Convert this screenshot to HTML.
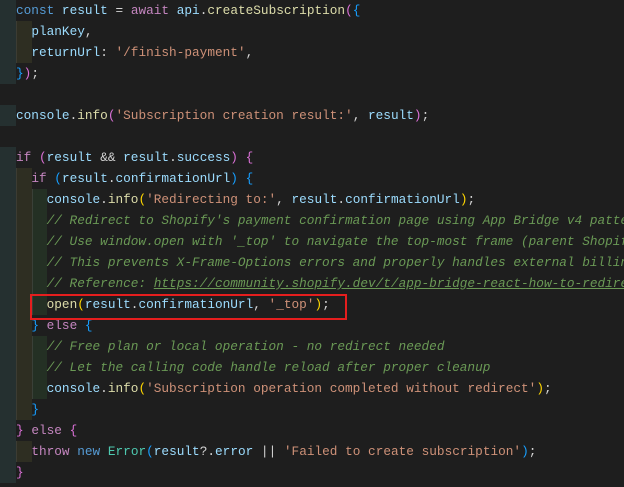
<!DOCTYPE html>
<html><head><meta charset="utf-8"><style>
body{margin:0;background:#1e1e1e;width:624px;height:487px;overflow:hidden;position:relative}
.l{position:absolute;left:0;height:21px;width:624px;overflow:hidden;white-space:pre;font-family:"Liberation Mono",monospace;font-size:12.75px;line-height:21px;color:#d4d4d4}
.t{position:absolute;left:16px;top:0}
.g0,.g1,.g2{position:absolute;top:0;height:21px}
.g0{left:0;width:16px;background:#253030}
.g1{left:16px;width:15px;background:#2e2e22;border-left:1px solid #3c3c33}
.g2{left:32px;width:14px;background:#243024;border-left:1px solid #3a4038}
.k{color:#569cd6}.v{color:#9cdcfe}.p{color:#c586c0}.f{color:#dcdcaa}.s{color:#ce9178}.c{color:#6a9955;font-style:italic}.u{text-decoration:underline}.e{color:#4ec9b0}
.b1{color:#da70d6}.b2{color:#179fff}.b3{color:#ffd700}
.box{position:absolute;left:30px;top:294px;width:313px;height:22px;border:2px solid #e51e1e}
</style></head><body>
<div class="l" style="top:0"><div class="g0"></div><span class="t"><span class="k">const</span> <span class="v">result</span> = <span class="p">await</span> <span class="v">api</span>.<span class="f">createSubscription</span><span class="b1">(</span><span class="b2">{</span></span></div>
<div class="l" style="top:21px"><div class="g0"></div><div class="g1"></div><span class="t">  <span class="v">planKey</span>,</span></div>
<div class="l" style="top:42px"><div class="g0"></div><div class="g1"></div><span class="t">  <span class="v">returnUrl</span>: <span class="s">'/finish-payment'</span>,</span></div>
<div class="l" style="top:63px"><div class="g0"></div><span class="t"><span class="b2">}</span><span class="b1">)</span>;</span></div>
<div class="l" style="top:105px"><div class="g0"></div><span class="t"><span class="v">console</span>.<span class="f">info</span><span class="b1">(</span><span class="s">'Subscription creation result:'</span>, <span class="v">result</span><span class="b1">)</span>;</span></div>
<div class="l" style="top:147px"><div class="g0"></div><span class="t"><span class="p">if</span> <span class="b1">(</span><span class="v">result</span> &amp;&amp; <span class="v">result</span>.<span class="v">success</span><span class="b1">)</span> <span class="b1">{</span></span></div>
<div class="l" style="top:168px"><div class="g0"></div><div class="g1"></div><span class="t">  <span class="p">if</span> <span class="b2">(</span><span class="v">result</span>.<span class="v">confirmationUrl</span><span class="b2">)</span> <span class="b2">{</span></span></div>
<div class="l" style="top:189px"><div class="g0"></div><div class="g1"></div><div class="g2"></div><span class="t">    <span class="v">console</span>.<span class="f">info</span><span class="b3">(</span><span class="s">'Redirecting to:'</span>, <span class="v">result</span>.<span class="v">confirmationUrl</span><span class="b3">)</span>;</span></div>
<div class="l" style="top:210px"><div class="g0"></div><div class="g1"></div><div class="g2"></div><span class="t c">    // Redirect to Shopify's payment confirmation page using App Bridge v4 pattern</span></div>
<div class="l" style="top:231px"><div class="g0"></div><div class="g1"></div><div class="g2"></div><span class="t c">    // Use window.open with '_top' to navigate the top-most frame (parent Shopify</span></div>
<div class="l" style="top:252px"><div class="g0"></div><div class="g1"></div><div class="g2"></div><span class="t c">    // This prevents X-Frame-Options errors and properly handles external billing</span></div>
<div class="l" style="top:273px"><div class="g0"></div><div class="g1"></div><div class="g2"></div><span class="t c">    // Reference: <span class="u">https://community.shopify.dev/t/app-bridge-react-how-to-redirect</span></span></div>
<div class="l" style="top:294px"><div class="g0"></div><div class="g1"></div><div class="g2"></div><span class="t">    <span class="f">open</span><span class="b3">(</span><span class="v">result</span>.<span class="v">confirmationUrl</span>, <span class="s">'_top'</span><span class="b3">)</span>;</span></div>
<div class="l" style="top:315px"><div class="g0"></div><div class="g1"></div><span class="t">  <span class="b2">}</span> <span class="p">else</span> <span class="b2">{</span></span></div>
<div class="l" style="top:336px"><div class="g0"></div><div class="g1"></div><div class="g2"></div><span class="t c">    // Free plan or local operation - no redirect needed</span></div>
<div class="l" style="top:357px"><div class="g0"></div><div class="g1"></div><div class="g2"></div><span class="t c">    // Let the calling code handle reload after proper cleanup</span></div>
<div class="l" style="top:378px"><div class="g0"></div><div class="g1"></div><div class="g2"></div><span class="t">    <span class="v">console</span>.<span class="f">info</span><span class="b3">(</span><span class="s">'Subscription operation completed without redirect'</span><span class="b3">)</span>;</span></div>
<div class="l" style="top:399px"><div class="g0"></div><div class="g1"></div><span class="t">  <span class="b2">}</span></span></div>
<div class="l" style="top:420px"><div class="g0"></div><span class="t"><span class="b1">}</span> <span class="p">else</span> <span class="b1">{</span></span></div>
<div class="l" style="top:441px"><div class="g0"></div><div class="g1"></div><span class="t">  <span class="p">throw</span> <span class="k">new</span> <span class="e">Error</span><span class="b2">(</span><span class="v">result</span>?.<span class="v">error</span> || <span class="s">'Failed to create subscription'</span><span class="b2">)</span>;</span></div>
<div class="l" style="top:462px"><div class="g0"></div><span class="t"><span class="b1">}</span></span></div>
<div class="box"></div>
</body></html>
